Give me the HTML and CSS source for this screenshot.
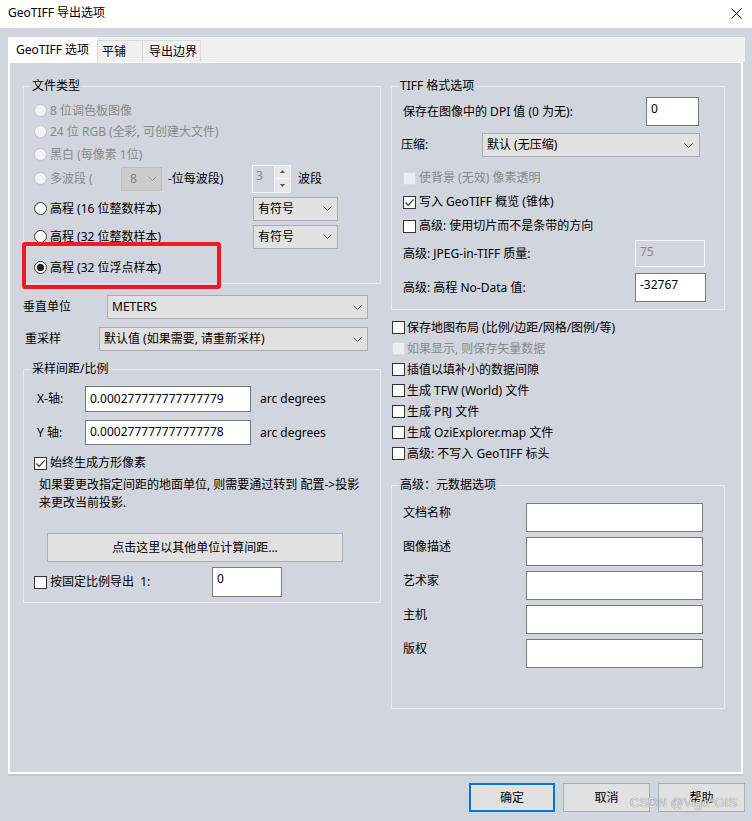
FILE: index.html
```html
<!DOCTYPE html>
<html>
<head>
    <title>GeoTIFF 导出选项</title>
    <meta charset="utf-8">
    <link rel="stylesheet" href="styles.css">
</head>
<body>
    <div class="titlebar">
        <span class="title">GeoTIFF 导出选项</span>
        <svg class="close" width="11" height="11" viewBox="0 0 11 11"><path d="M0.5 0.5L10.5 10.5M10.5 0.5L0.5 10.5" stroke="#000" stroke-width="1"/></svg>
    </div>

    <div class="window-body">
        <div class="tabs">
            <div class="tab active">GeoTIFF 选项</div>
            <div class="tab tab-tile">平铺</div>
            <div class="tab tab-bounds">导出边界</div>
        </div>

        <div class="panel">
            <!-- 左列 -->
            <div class="col-left">
                <fieldset class="group group-type">
                    <legend>文件类型</legend>
                    <div class="opt mt6 disabled"><span class="radio"></span>8 位调色板图像</div>
                    <div class="opt disabled"><span class="radio"></span>24 位 RGB (全彩, 可创建大文件)</div>
                    <div class="opt mt2 disabled"><span class="radio"></span>黑白 (每像素 1位)</div>
                    <div class="opt mt3">
                        <span class="radio off"></span>
                        <span class="multi-label disabled">多波段 (</span>
                        <div class="select select-bits disabled-select"><span>8</span><svg width="9" height="5" viewBox="0 0 9 5"><path d="M0.5 0.5L4.5 4.5L8.5 0.5" fill="none" stroke="#9a9a9a"/></svg></div>
                        <span class="multi-mid">-位每波段)</span>
                        <div class="spin">
                            <span class="spin-val">3</span>
                            <span class="spin-btns">
                                <span class="spin-btn"><svg width="5" height="3" viewBox="0 0 5 3"><path d="M0 3L2.5 0L5 3Z" fill="#555"/></svg></span>
                                <span class="spin-btn"><svg width="5" height="3" viewBox="0 0 5 3"><path d="M0 0L2.5 3L5 0Z" fill="#555"/></svg></span>
                            </span>
                        </div>
                        <span class="spin-unit">波段</span>
                    </div>
                    <div class="opt mt9">
                        <span class="radio"></span>
                        <span class="opt-wide">高程 (16 位整数样本)</span>
                        <div class="select select-sign"><span>有符号</span><svg width="9" height="5" viewBox="0 0 9 5"><path d="M0.5 0.5L4.5 4.5L8.5 0.5" fill="none" stroke="#444"/></svg></div>
                    </div>
                    <div class="opt mt7">
                        <span class="radio"></span>
                        <span class="opt-wide">高程 (32 位整数样本)</span>
                        <div class="select select-sign"><span>有符号</span><svg width="9" height="5" viewBox="0 0 9 5"><path d="M0.5 0.5L4.5 4.5L8.5 0.5" fill="none" stroke="#444"/></svg></div>
                    </div>
                    <div class="opt mt10"><span class="radio checked"></span>高程 (32 位浮点样本)</div>
                </fieldset>

                <div class="unit-row">
                    <span class="unit-label">垂直单位</span>
                    <div class="select select-unit"><span>METERS</span><svg width="9" height="5" viewBox="0 0 9 5"><path d="M0.5 0.5L4.5 4.5L8.5 0.5" fill="none" stroke="#444"/></svg></div>
                </div>
                <div class="unit-row resample-row">
                    <span class="unit-label resample-label">重采样</span>
                    <div class="select select-resample"><span>默认值 (如果需要, 请重新采样)</span><svg width="9" height="5" viewBox="0 0 9 5"><path d="M0.5 0.5L4.5 4.5L8.5 0.5" fill="none" stroke="#444"/></svg></div>
                </div>

                <fieldset class="group group-spacing">
                    <legend>采样间距/比例</legend>
                    <div class="axis-row mt9">
                        <span class="axis-label">X-轴:</span>
                        <div class="field field-axis">0.000277777777777779</div>
                        <span class="axis-unit">arc degrees</span>
                    </div>
                    <div class="axis-row mt8">
                        <span class="axis-label">Y 轴:</span>
                        <div class="field field-axis field-axis-y">0.000277777777777778</div>
                        <span class="axis-unit">arc degrees</span>
                    </div>
                    <div class="chk-row mt8"><span class="chk"><svg width="11" height="11" viewBox="0 0 11 11"><path d="M1.5 5.5L4.2 8.3L9.6 2.4" fill="none" stroke="#333" stroke-width="1.2"/></svg></span>始终生成方形像素</div>
                    <p class="note">如果要更改指定间距的地面单位, 则需要通过转到 配置-&gt;投影<br>来更改当前投影.</p>
                    <div class="btn btn-calc">点击这里以其他单位计算间距...</div>
                    <div class="chk-row scale-row">
                        <span class="chk"></span>
                        <span class="scale-label">按固定比例导出&nbsp;&nbsp;1:</span>
                        <div class="field field-scale">0</div>
                    </div>
                </fieldset>
            </div>

            <!-- 右列 -->
            <div class="col-right">
                <fieldset class="group group-tiff">
                    <legend>TIFF 格式选项</legend>
                    <div class="form-row dpi-row">
                        <span class="dpi-label">保存在图像中的 DPI 值 (0 为无):</span>
                        <div class="field field-dpi">0</div>
                    </div>
                    <div class="form-row compress-row">
                        <span class="compress-label">压缩:</span>
                        <div class="select select-compress"><span>默认 (无压缩)</span><svg width="9" height="5" viewBox="0 0 9 5"><path d="M0.5 0.5L4.5 4.5L8.5 0.5" fill="none" stroke="#444"/></svg></div>
                    </div>
                    <div class="chk-row tiff-chk mt11 disabled"><span class="chk chk-off"></span>使背景 (无效) 像素透明</div>
                    <div class="chk-row tiff-chk mt4"><span class="chk"><svg width="11" height="11" viewBox="0 0 11 11"><path d="M1.5 5.5L4.2 8.3L9.6 2.4" fill="none" stroke="#333" stroke-width="1.2"/></svg></span>写入 GeoTIFF 概览 (锥体)</div>
                    <div class="chk-row tiff-chk mt4"><span class="chk"></span>高级: 使用切片而不是条带的方向</div>
                    <div class="form-row jpeg-row">
                        <span class="adv-label">高级: JPEG-in-TIFF 质量:</span>
                        <div class="field field-off">75</div>
                    </div>
                    <div class="form-row nodata-row">
                        <span class="adv-label">高级: 高程 No-Data 值:</span>
                        <div class="field field-nodata">-32767</div>
                    </div>
                </fieldset>

                <div class="chk-list">
                    <div class="chk-item"><span class="chk"></span>保存地图布局 (比例/边距/网格/图例/等)</div>
                    <div class="chk-item disabled"><span class="chk chk-off"></span>如果显示, 则保存矢量数据</div>
                    <div class="chk-item"><span class="chk"></span>插值以填补小的数据间隙</div>
                    <div class="chk-item"><span class="chk"></span>生成 TFW (World) 文件</div>
                    <div class="chk-item"><span class="chk"></span>生成 PRJ 文件</div>
                    <div class="chk-item"><span class="chk"></span>生成 OziExplorer.map 文件</div>
                    <div class="chk-item"><span class="chk"></span>高级: 不写入 GeoTIFF 标头</div>
                </div>

                <fieldset class="group group-meta">
                    <legend>高级：元数据选项</legend>
                    <div class="meta-row"><span class="meta-label">文档名称</span><div class="field field-meta"></div></div>
                    <div class="meta-row"><span class="meta-label">图像描述</span><div class="field field-meta"></div></div>
                    <div class="meta-row"><span class="meta-label">艺术家</span><div class="field field-meta"></div></div>
                    <div class="meta-row"><span class="meta-label">主机</span><div class="field field-meta"></div></div>
                    <div class="meta-row"><span class="meta-label">版权</span><div class="field field-meta"></div></div>
                </fieldset>
            </div>
        </div>

        <div class="buttons">
            <div class="btn btn-dlg btn-default">确定</div>
            <div class="btn btn-dlg">取消</div>
            <div class="btn btn-dlg">帮助</div>
        </div>
    </div>

    <div class="highlight"></div>
    <div class="watermark">CSDN @Vigo*GIS</div>
</body>
</html>
```

FILE: styles.css
```css
body {
    margin: 0;
    width: 752px;
    height: 821px;
    overflow: hidden;
    position: relative;
    background: #d1d5dd;
    font-family: "Noto Sans", "Noto Sans CJK SC", sans-serif;
    font-size: 12px;
    line-height: 16px;
    color: #000;
}
.titlebar {
    height: 28px;
    background: #fff;
    display: flex;
    align-items: center;
    justify-content: space-between;
    padding: 0 10px 2px 8px;
    box-sizing: border-box;
}
.window-body {
    padding: 9px 7px 0 8px;
}
.tabs {
    display: flex;
    align-items: flex-end;
    width: 737px;
    height: 25px;
    background: #f0f0f0;
}
.tab {
    height: 22px;
    line-height: 21px;
    box-sizing: border-box;
    border: 1px solid #d9d9d9;
    border-bottom: none;
    padding-left: 4px;
    background: #f0f0f0;
}
.tab.active {
    height: 25px;
    width: 89px;
    line-height: 24px;
    padding-left: 7px;
    background: #fff;
    border-color: #fff;
}
.tab-tile {
    width: 46px;
}
.tab-bounds {
    width: 59px;
    margin-left: -1px;
    padding-left: 6px;
}
.panel {
    width: 735px;
    height: 712px;
    box-sizing: border-box;
    border: 2px solid #fff;
    border-top-width: 1px;
    box-shadow: 0 2px 0 #c3c6cc;
    display: flex;
    gap: 10px;
    padding: 15px 0 0 13px;
}
.col-left {
    width: 358px;
}
.col-right {
    width: 334px;
}
.group {
    border: 1px solid #e6e8ec;
    margin: 0;
    padding: 0 0 5px;
    min-width: 0;
}
.group legend {
    margin-left: 7px;
    padding: 0 1px;
    line-height: 16px;
}
.disabled {
    color: #8a8a8a;
}
.mt2 { margin-top: 2px; }
.mt3 { margin-top: 3px; }
.mt4 { margin-top: 4px; }
.mt6 { margin-top: 6px; }
.mt7 { margin-top: 7px; }
.mt8 { margin-top: 8px; }
.mt9 { margin-top: 9px; }
.mt10 { margin-top: 10px; }
.mt11 { margin-top: 11px; }

/* 单选按钮 */
.opt {
    display: flex;
    align-items: center;
    height: 21px;
    padding-left: 10px;
    white-space: nowrap;
}
.radio {
    width: 13px;
    height: 13px;
    box-sizing: border-box;
    border-radius: 50%;
    border: 1px solid #333;
    background: #fff;
    margin-right: 3px;
    flex: none;
}
.disabled .radio, .radio.off {
    border-color: #c2c4c8;
    background: #f2f3f5;
}
.radio.checked {
    background: radial-gradient(circle, #222 0 3.4px, #fff 3.9px);
}
.multi-label {
    width: 71px;
}
.multi-mid {
    width: 84px;
    margin-left: 6px;
}
.opt-wide {
    width: 203px;
}

/* 下拉框 */
.select {
    height: 24px;
    box-sizing: border-box;
    border: 1px solid #adadad;
    background: #e1e1e1;
    display: flex;
    align-items: center;
    justify-content: space-between;
    padding: 0 5px 0 4px;
    white-space: nowrap;
    flex: none;
}
.select-bits {
    width: 41px;
    padding: 0 4px 0 8px;
}
.disabled-select {
    background: #cccccc;
    border-color: #bfbfbf;
    color: #838383;
}
.select-sign {
    width: 85px;
}
.select-unit {
    width: 261px;
}
.select-resample {
    width: 269px;
}
.select-compress {
    width: 218px;
    padding-right: 6px;
}

/* 微调框 */
.spin {
    width: 39px;
    height: 28px;
    box-sizing: border-box;
    border: 1px solid #f4f4f4;
    display: flex;
    flex: none;
}
.spin-val {
    flex: 1;
    color: #8a8a8a;
    padding: 2px 0 0 3px;
}
.spin-btns {
    width: 15px;
    display: flex;
    flex-direction: column;
    border-left: 1px solid #f4f4f4;
}
.spin-btn {
    flex: 1;
    display: flex;
    align-items: center;
    justify-content: center;
    background: #e8e9eb;
}
.spin-btn + .spin-btn {
    border-top: 1px solid #f4f4f4;
}
.spin-unit {
    margin-left: 7px;
}

/* 输入框 */
.field {
    background: #fff;
    border: 1px solid #7a7a7a;
    box-sizing: border-box;
    padding: 2px 4px;
    line-height: 18px;
    white-space: nowrap;
    flex: none;
}
.field-off {
    width: 70px;
    height: 27px;
    background: transparent;
    border: 1px solid #f4f4f4;
    color: #8a8a8a;
}

.unit-row {
    display: flex;
    align-items: center;
    height: 24px;
    margin-top: 11px;
}
.resample-row {
    margin-top: 8px;
}
.unit-label {
    width: 84px;
}
.resample-label {
    width: 74px;
    padding-left: 2px;
}
.group-spacing {
    margin-top: 10px;
}
.axis-row {
    display: flex;
    align-items: center;
    padding-left: 13px;
}
.axis-label {
    width: 48px;
}
.field-axis {
    width: 166px;
    height: 26px;
    padding-top: 3px;
}
.field-axis-y {
    height: 25px;
    padding-top: 2px;
}
.axis-unit {
    margin-left: 9px;
}

/* 复选框 */
.chk-row {
    display: flex;
    align-items: center;
    height: 20px;
    padding-left: 10px;
    white-space: nowrap;
}
.chk {
    width: 13px;
    height: 13px;
    box-sizing: border-box;
    border: 1px solid #333;
    background: #fff;
    margin-right: 3px;
    flex: none;
    display: flex;
}
.chk svg {
    display: block;
}
.chk.chk-off {
    border-color: #d8dade;
    background: #eceef1;
}
.note {
    margin: 3px 0 0;
    padding-left: 15px;
    line-height: 18px;
    white-space: nowrap;
}
.btn {
    box-sizing: border-box;
    height: 29px;
    border: 1px solid #adadad;
    background: #e1e1e1;
    display: flex;
    align-items: center;
    justify-content: center;
}
.btn-calc {
    width: 296px;
    margin: 21px 0 0 23px;
}
.scale-row {
    height: 30px;
    margin-top: 5px;
}
.scale-label {
    width: 162px;
}
.field-scale {
    width: 70px;
    height: 30px;
}

/* 右列 */
.form-row {
    display: flex;
    align-items: center;
    padding-left: 11px;
    white-space: nowrap;
}
.dpi-row {
    height: 29px;
    margin-top: 3px;
}
.dpi-label {
    width: 243px;
}
.field-dpi {
    width: 53px;
    height: 29px;
}
.compress-row {
    height: 24px;
    margin-top: 7px;
    padding-left: 9px;
}
.compress-label {
    width: 81px;
}
.tiff-chk {
    padding-left: 11px;
}
.jpeg-row {
    height: 27px;
    margin-top: 4px;
}
.nodata-row {
    height: 29px;
    margin-top: 6px;
}
.adv-label {
    width: 232px;
}
.field-nodata {
    width: 71px;
    height: 29px;
}
.group-tiff {
    padding-bottom: 7px;
}
.chk-list {
    margin-top: 7px;
}
.chk-item {
    display: flex;
    align-items: center;
    height: 21px;
    padding-left: 1px;
    white-space: nowrap;
}
.chk-item .chk {
    margin-right: 2px;
}
.group-meta {
    margin-top: 13px;
    padding: 10px 0 40px;
}
.meta-row {
    display: flex;
    padding-left: 11px;
}
.meta-row + .meta-row {
    margin-top: 5px;
}
.meta-label {
    width: 123px;
    line-height: 20px;
}
.field-meta {
    width: 177px;
    height: 29px;
}

/* 底部按钮 */
.buttons {
    display: flex;
    justify-content: flex-end;
    gap: 8px;
    margin-top: 9px;
}
.btn-dlg {
    width: 87px;
}
.btn-default {
    width: 86px;
    border: 2px solid #0078d7;
}

/* 标注层 */
.highlight {
    position: absolute;
    left: 22px;
    top: 242px;
    width: 199px;
    height: 47px;
    box-sizing: border-box;
    border: 4px solid #ed1c24;
    border-radius: 3px;
}
.watermark {
    position: absolute;
    left: 630px;
    top: 795px;
    font-family: "Liberation Sans", sans-serif;
    font-size: 13px;
    line-height: 16px;
    color: rgba(232, 233, 236, 0.95);
    text-shadow: 0 0 1px rgba(0, 0, 0, 0.6);
}
```
